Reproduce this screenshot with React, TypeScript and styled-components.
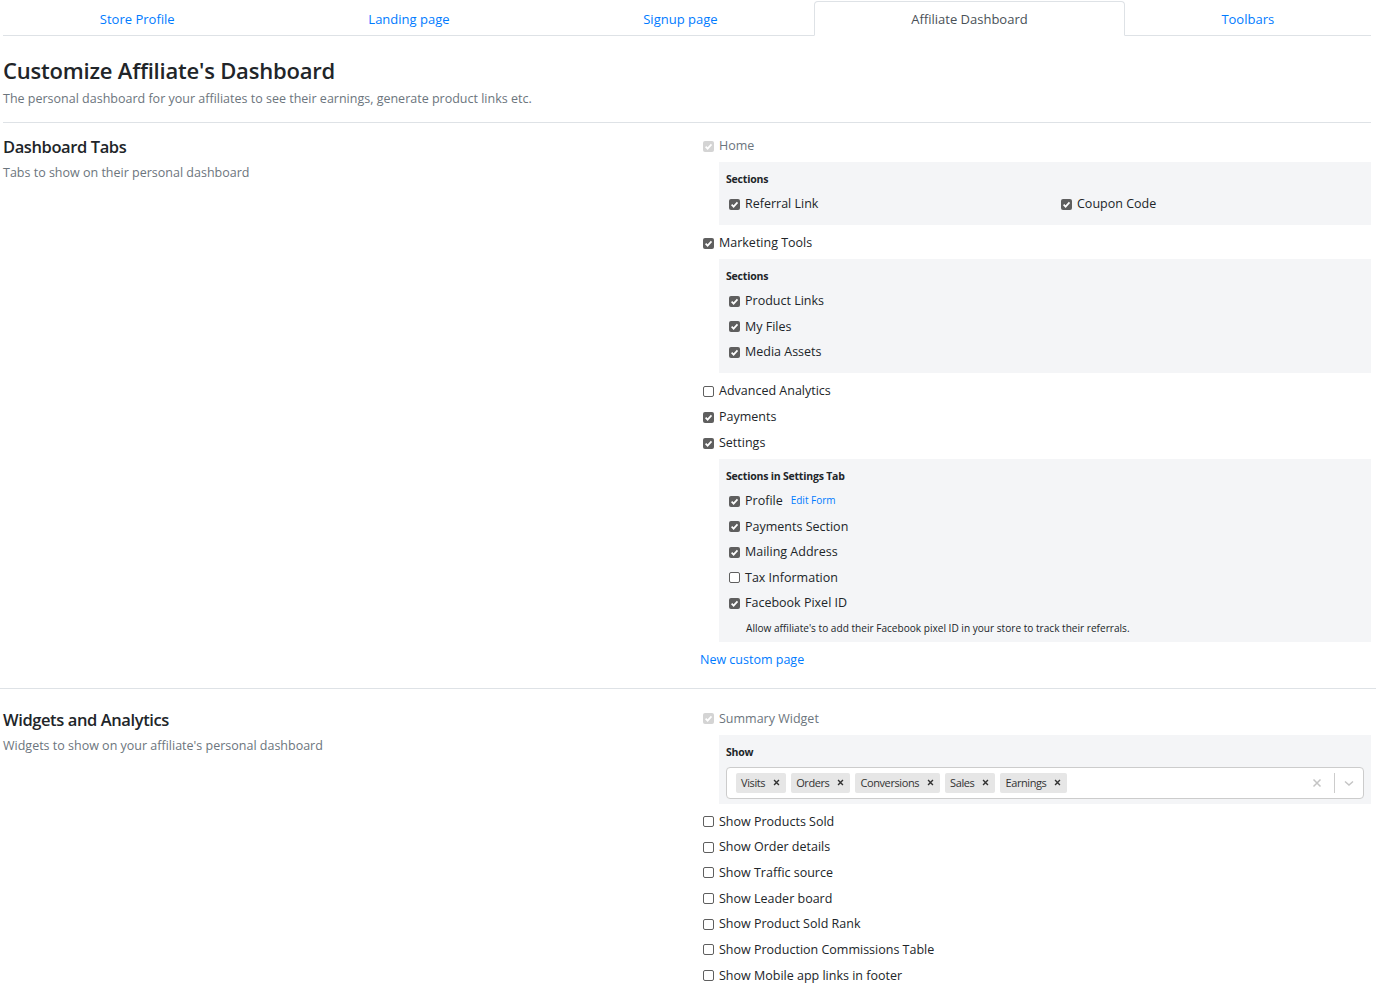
import React from 'react';
import styled, { createGlobalStyle, css } from 'styled-components';

const GlobalStyle = createGlobalStyle`
  body {
    margin: 0;
    font-family: "Open Sans", "Noto Sans", sans-serif;
    color: #212529;
    background: #fff;
  }
  * { box-sizing: border-box; }
`;

const Page = styled.div`
  padding: 0 5px 0 3px;
`;

const TabNav = styled.nav`
  display: flex;
  padding-top: 1px;
  border-bottom: 1px solid #dee2e6;
`;

const Tab = styled.a<{ $active?: boolean }>`
  flex: 1 1 auto;
  text-align: center;
  font-size: 13px;
  line-height: 18px;
  padding: 8px 16px 7px;
  margin-bottom: -1px;
  color: #007bff;
  border: 1px solid transparent;
  border-radius: 4px 4px 0 0;
  cursor: pointer;
  ${(p) =>
    p.$active &&
    css`
      color: #495057;
      background: #fff;
      border-color: #dee2e6 #dee2e6 #fff;
    `}
`;

const Header = styled.header`
  padding: 20px 0 13px;
  border-bottom: 1px solid #dee2e6;
`;

const Title = styled.h1`
  margin: 0 0 4px;
  font-size: 22px;
  line-height: 29px;
  font-weight: 600;
  letter-spacing: -0.2px;
`;

const Subtitle = styled.p`
  margin: 0;
  font-size: 12.5px;
  line-height: 20px;
  color: #6c757d;
`;

const Section = styled.section<{ $top: number; $bottom: number; $divider?: boolean }>`
  display: grid;
  grid-template-columns: 697px 1fr;
  padding-top: ${(p) => p.$top}px;
  padding-bottom: ${(p) => p.$bottom}px;
  ${(p) =>
    p.$divider &&
    css`
      margin: 0 -5px 0 -3px;
      padding-left: 3px;
      padding-right: 5px;
      border-top: 1px solid #dee2e6;
    `}
`;

const SectionInfo = styled.div``;

const SectionTitle = styled.h2`
  margin: 0 0 5px;
  font-size: 16.5px;
  line-height: 22px;
  font-weight: 600;
  letter-spacing: -0.4px;
`;

const SectionText = styled.p`
  margin: 0;
  font-size: 12.5px;
  line-height: 20px;
  color: #6c757d;
`;

const List = styled.div<{ $gap: number }>`
  display: flex;
  flex-direction: column;
  gap: ${(p) => p.$gap}px;
`;

const Row = styled.label<{ $muted?: boolean }>`
  display: flex;
  align-items: center;
  gap: 5px;
  padding-left: 3px;
  font-size: 12.5px;
  line-height: 20px;
  color: ${(p) => (p.$muted ? '#6c757d' : '#212529')};
`;

const Box = styled.span<{ $state: 'on' | 'off' | 'disabled' }>`
  flex: none;
  width: 11px;
  height: 11px;
  border-radius: 2px;
  display: inline-flex;
  align-items: center;
  justify-content: center;
  ${(p) =>
    p.$state === 'on'
      ? css`
          background: #5f5f5f;
        `
      : p.$state === 'disabled'
      ? css`
          background: #d4d4d4;
        `
      : css`
          background: #fff;
          border: 1px solid #5f5f5f;
        `}
`;

const Panel = styled.div<{ $pb?: number }>`
  margin-left: 19px;
  margin-bottom: 2px;
  background: #f4f5f7;
  padding: 9px 7px ${(p) => p.$pb ?? 11}px;
`;

const PanelTitle = styled.div`
  font-size: 10.5px;
  line-height: 16px;
  font-weight: 700;
  letter-spacing: -0.2px;
  margin-bottom: 7px;
`;

const PanelList = styled.div`
  display: flex;
  flex-direction: column;
  gap: 5.5px;
`;

const PanelGrid = styled.div`
  display: grid;
  grid-template-columns: 332px 1fr;
`;

const Link = styled.a<{ $small?: boolean }>`
  color: #007bff;
  cursor: pointer;
  font-size: ${(p) => (p.$small ? '10px' : '12.5px')};
  line-height: ${(p) => (p.$small ? '16px' : '20px')};
  ${(p) =>
    p.$small &&
    css`
      margin-left: 3px;
      margin-top: -3px;
    `}
`;

const NewPageLink = styled(Link)`
  display: block;
`;

const Note = styled.div`
  font-size: 10.1px;
  line-height: 16px;
  padding-left: 20px;
  margin-top: 1px;
  margin-bottom: -5px;
`;

const Select = styled.div`
  display: flex;
  align-items: center;
  height: 32px;
  background: #fff;
  border: 1px solid #cccccc;
  border-radius: 4px;
  padding-left: 9px;
`;

const Tags = styled.div`
  flex: 1;
  display: flex;
  gap: 5px;
`;

const Tag = styled.span`
  display: inline-flex;
  align-items: center;
  background: #e6e6e6;
  border-radius: 2px;
  font-size: 11px;
  letter-spacing: -0.4px;
  line-height: 20px;
  color: #333;
  padding-left: 5px;
`;

const TagRemove = styled.span`
  display: inline-flex;
  align-items: center;
  padding: 0 6px 0 8px;
  height: 20px;
`;

const Indicators = styled.div`
  display: flex;
  align-items: center;
  height: 100%;
`;

const Indicator = styled.span<{ $pl: number; $pr: number }>`
  display: inline-flex;
  align-items: center;
  padding: 0 ${(p) => p.$pr}px 0 ${(p) => p.$pl}px;
`;

const Separator = styled.span`
  width: 1px;
  height: 20px;
  background: #ccc;
`;

function Check({ state }: { state: 'on' | 'off' | 'disabled' }) {
  return (
    <Box $state={state}>
      {state !== 'off' && (
        <svg width="9" height="9" viewBox="0 0 10 10">
          <path d="M1.8 5.2 L4 7.4 L8.3 2.6" fill="none" stroke="#fff" strokeWidth="1.9" />
        </svg>
      )}
    </Box>
  );
}

function Item({
  label,
  state = 'on',
  children,
}: {
  label: string;
  state?: 'on' | 'off' | 'disabled';
  children?: React.ReactNode;
}) {
  return (
    <Row $muted={state === 'disabled'}>
      <Check state={state} />
      {label}
      {children}
    </Row>
  );
}

const XIcon = ({ size, color, width }: { size: number; color: string; width: number }) => (
  <svg width={size} height={size} viewBox="0 0 10 10">
    <path d="M1.5 1.5 L8.5 8.5 M8.5 1.5 L1.5 8.5" stroke={color} strokeWidth={width} fill="none" />
  </svg>
);

const tabs = ['Store Profile', 'Landing page', 'Signup page', 'Affiliate Dashboard', 'Toolbars'];
const tags = ['Visits', 'Orders', 'Conversions', 'Sales', 'Earnings'];
const widgetOptions = [
  'Show Products Sold',
  'Show Order details',
  'Show Traffic source',
  'Show Leader board',
  'Show Product Sold Rank',
  'Show Production Commissions Table',
  'Show Mobile app links in footer',
];

export default function App() {
  return (
    <>
      <GlobalStyle />
      <Page>
        <TabNav>
          {tabs.map((t) => (
            <Tab key={t} $active={t === 'Affiliate Dashboard'}>
              {t}
            </Tab>
          ))}
        </TabNav>

        <Header>
          <Title>Customize Affiliate's Dashboard</Title>
          <Subtitle>
            The personal dashboard for your affiliates to see their earnings, generate product links etc.
          </Subtitle>
        </Header>

        <Section $top={13} $bottom={18}>
          <SectionInfo>
            <SectionTitle>Dashboard Tabs</SectionTitle>
            <SectionText>Tabs to show on their personal dashboard</SectionText>
          </SectionInfo>
          <List $gap={6}>
            <Item label="Home" state="disabled" />
            <Panel>
              <PanelTitle>Sections</PanelTitle>
              <PanelGrid>
                <Item label="Referral Link" />
                <Item label="Coupon Code" />
              </PanelGrid>
            </Panel>
            <Item label="Marketing Tools" />
            <Panel>
              <PanelTitle>Sections</PanelTitle>
              <PanelList>
                <Item label="Product Links" />
                <Item label="My Files" />
                <Item label="Media Assets" />
              </PanelList>
            </Panel>
            <Item label="Advanced Analytics" state="off" />
            <Item label="Payments" />
            <Item label="Settings" />
            <Panel>
              <PanelTitle>Sections in Settings Tab</PanelTitle>
              <PanelList>
                <Item label="Profile">
                  <Link $small>Edit Form</Link>
                </Item>
                <Item label="Payments Section" />
                <Item label="Mailing Address" />
                <Item label="Tax Information" state="off" />
                <Item label="Facebook Pixel ID" />
                <Note>Allow affiliate's to add their Facebook pixel ID in your store to track their referrals.</Note>
              </PanelList>
            </Panel>
            <NewPageLink>New custom page</NewPageLink>
          </List>
        </Section>

        <Section $top={20} $bottom={10} $divider>
          <SectionInfo>
            <SectionTitle>Widgets and Analytics</SectionTitle>
            <SectionText>Widgets to show on your affiliate's personal dashboard</SectionText>
          </SectionInfo>
          <List $gap={6}>
            <Item label="Summary Widget" state="disabled" />
            <Panel $pb={5}>
              <PanelTitle>Show</PanelTitle>
              <Select>
                <Tags>
                  {tags.map((t) => (
                    <Tag key={t}>
                      {t}
                      <TagRemove>
                        <XIcon size={7} color="#333" width={2} />
                      </TagRemove>
                    </Tag>
                  ))}
                </Tags>
                <Indicators>
                  <Indicator $pl={8} $pr={12}>
                    <XIcon size={10} color="#c4c4c4" width={1.5} />
                  </Indicator>
                  <Separator />
                  <Indicator $pl={8} $pr={8}>
                    <svg width="12" height="12" viewBox="0 0 12 12">
                      <path d="M2 4.5 L6 8 L10 4.5" fill="none" stroke="#c4c4c4" strokeWidth="1.4" />
                    </svg>
                  </Indicator>
                </Indicators>
              </Select>
            </Panel>
            <List $gap={5.7}>
              {widgetOptions.map((w) => (
                <Item key={w} label={w} state="off" />
              ))}
            </List>
          </List>
        </Section>
      </Page>
    </>
  );
}
